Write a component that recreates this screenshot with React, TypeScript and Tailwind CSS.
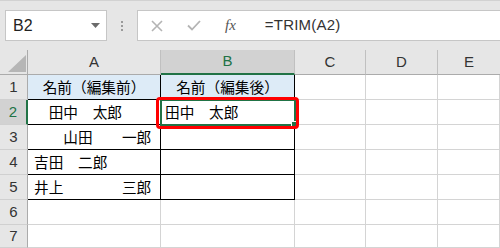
import React from "react";

const cellFont = { fontFamily: '"Noto Sans CJK JP", "Noto Sans", sans-serif' } as const;
const uiFont = { fontFamily: '"Liberation Sans", Arial, sans-serif' } as const;

const COLS = "grid grid-cols-[28px_133px_134px_71px_72px_62px]";

function ColHeader({ label, selected, last }: { label: string; selected?: boolean; last?: boolean }) {
  return (
    <div
      className={
        "flex items-center justify-center text-[15px] " +
        (selected
          ? "bg-[#d2d2d2] text-[#217346] border-b-2 border-b-[#217346] border-r border-r-[#c0c0c0]"
          : "bg-[#e6e6e6] text-[#333] border-b border-b-[#ababab] " + (last ? "" : "border-r border-r-[#c0c0c0]"))
      }
      style={uiFont}
    >
      {label}
    </div>
  );
}

function RowHeader({ n, selected, h }: { n: number; selected?: boolean; h?: string }) {
  return (
    <div
      className={
        "flex items-center justify-center text-[15px] border-b border-b-[#d0d0d0] " +
        (h ? h + " " : "h-[25px] ") +
        (selected
          ? "bg-[#d2d2d2] text-[#217346] border-r-2 border-r-[#217346]"
          : "bg-[#e6e6e6] text-[#333] border-r border-r-[#ababab]")
      }
      style={uiFont}
    >
      {n}
    </div>
  );
}

function Cell({
  text,
  table,
  head,
  center,
  padA,
  children,
  h,
}: {
  text?: string;
  table?: boolean;
  head?: boolean;
  center?: boolean;
  padA?: boolean;
  children?: React.ReactNode;
  h?: string;
}) {
  return (
    <div
      className={
        "relative flex items-center whitespace-pre text-[14.67px] leading-none text-black border-r border-b " +
        (h ? h + " " : "h-[25px] ") +
        (table ? "border-black " : "border-[#d4d4d4] ") +
        (head ? "bg-[#ddebf7] " : "bg-white ") +
        (center ? "justify-center " : padA ? "pl-[6px] " : "pl-[4px] ")
      }
      style={cellFont}
    >
      {text}
      {children}
    </div>
  );
}

export default function App() {
  const rows: { n: number; a: string; b: string; head?: boolean }[] = [
    { n: 1, a: "名前（編集前）", b: "名前（編集後）", head: true },
    { n: 2, a: "　田中　太郎", b: "田中　太郎" },
    { n: 3, a: "　　山田　　一郎", b: "" },
    { n: 4, a: "吉田　二郎", b: "" },
    { n: 5, a: "井上　　　　三郎", b: "" },
  ];

  return (
    <div className="w-[500px] h-[248px] overflow-hidden bg-[#e6e6e6] border-t border-t-[#d2d2d2]">
      {/* formula bar */}
      <div className="flex items-start h-[49px] pt-[9px]">
        <div className="ml-[5px] w-[102px] h-[31px] bg-white border border-[#c6c6c6] flex items-center justify-between pl-[7px] pr-[6px]">
          <span className="text-[16px] text-[#222]" style={uiFont}>B2</span>
          <svg width="9" height="5" viewBox="0 0 9 5">
            <path d="M0 0 L9 0 L4.5 5 Z" fill="#6b6b6b" />
          </svg>
        </div>
        <div className="w-[30px] h-[31px] flex flex-col items-center justify-center gap-[2px]">
          <span className="w-[2px] h-[2px] bg-[#9a9a9a]" />
          <span className="w-[2px] h-[2px] bg-[#9a9a9a]" />
          <span className="w-[2px] h-[2px] bg-[#9a9a9a]" />
        </div>
        <div className="flex-1 h-[31px] bg-white border border-[#c6c6c6] border-r-0 flex items-center">
          <svg className="ml-[13px]" width="12" height="12" viewBox="0 0 12 12">
            <path d="M1 1 L11 11 M11 1 L1 11" stroke="#b4b4b4" strokeWidth="1.6" />
          </svg>
          <svg className="ml-[24px]" width="14" height="11" viewBox="0 0 14 11">
            <path d="M1 5.5 L5 9.5 L13 1" stroke="#b4b4b4" strokeWidth="1.8" fill="none" />
          </svg>
          <span
            className="ml-[24px] text-[15px] italic text-[#555]"
            style={{ fontFamily: '"Liberation Serif", "Times New Roman", serif' }}
          >
            fx
          </span>
          <span className="ml-[29px] text-[15px] text-[#333] tracking-[0.2px]" style={uiFont}>
            =TRIM(A2)
          </span>
        </div>
      </div>

      {/* grid */}
      <div className={COLS + " grid-rows-[25px]"}>
        <div className="relative bg-[#e6e6e6] border-r border-r-[#ababab] border-b border-b-[#ababab]">
          <svg className="absolute left-[8px] top-[5px]" width="18" height="17" viewBox="0 0 18 17">
            <path d="M18 0 L18 17 L0 17 Z" fill="#b6b6b6" />
          </svg>
        </div>
        <ColHeader label="A" />
        <ColHeader label="B" selected />
        <ColHeader label="C" />
        <ColHeader label="D" />
        <ColHeader label="E" last />
      </div>

      {rows.map((r) => (
        <div key={r.n} className={COLS}>
          <RowHeader n={r.n} selected={r.n === 2} />
          <Cell text={r.a} table head={r.head} center={r.head} padA />
          <Cell text={r.b} table head={r.head} center={r.head}>
            {r.n === 2 && (
              <>
                <div className="absolute z-10 -left-[1px] -top-[1px] w-[136px] h-[27px] border-2 border-[#217346]" />
                <div className="absolute z-20 right-[-3px] bottom-[-3px] w-[6px] h-[6px] bg-[#217346] border border-white" />
                <div className="absolute z-30 -left-[5px] -top-[3px] w-[143px] h-[32px] border-[3px] border-[#ff0000] rounded-[4px]" />
              </>
            )}
          </Cell>
          <Cell />
          <Cell />
          <Cell />
        </div>
      ))}

      {[6, 7].map((n) => (
        <div key={n} className={COLS}>
          <RowHeader n={n} h={n === 7 ? "h-[23px]" : undefined} />
          <Cell h={n === 7 ? "h-[23px]" : undefined} />
          <Cell h={n === 7 ? "h-[23px]" : undefined} />
          <Cell h={n === 7 ? "h-[23px]" : undefined} />
          <Cell h={n === 7 ? "h-[23px]" : undefined} />
          <Cell h={n === 7 ? "h-[23px]" : undefined} />
        </div>
      ))}
    </div>
  );
}
